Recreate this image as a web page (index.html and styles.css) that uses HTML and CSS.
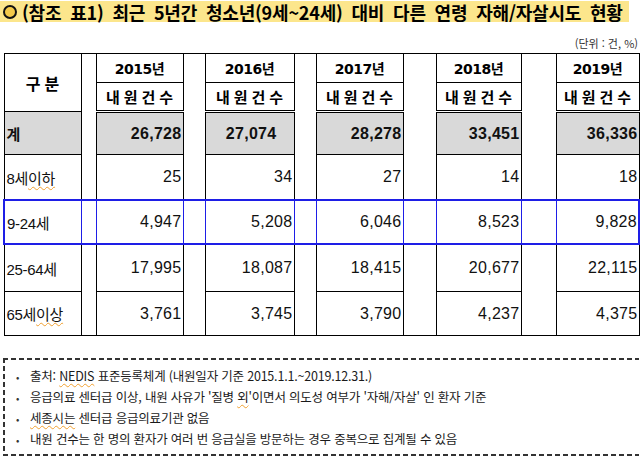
FILE: index.html
```html
<!DOCTYPE html>
<html lang="ko">
<head>
<meta charset="utf-8">
<link rel="stylesheet" href="styles.css">
</head>
<body>
<div class="title"><span class="title-hl"><span class="ring"></span>(참조 표1) 최근 5년간 청소년(9세~24세) 대비 다른 연령 자해/자살시도 현황</span></div>
<div class="unit">(단위 : 건, %)</div>
<table class="stats">
  <colgroup>
    <col class="c-label"><col class="g1"><col class="c15"><col class="g2"><col class="c16"><col class="g3"><col class="c17"><col class="g4"><col class="c18"><col class="g5"><col class="c19">
  </colgroup>
  <tr class="h1">
    <th class="label-h" rowspan="2">구분</th>
    <td class="gap" rowspan="4"></td>
    <th class="year">2015년</th>
    <td class="gap" rowspan="4"></td>
    <th class="year">2016년</th>
    <td class="gap" rowspan="4"></td>
    <th class="year">2017년</th>
    <td class="gap" rowspan="4"></td>
    <th class="year">2018년</th>
    <td class="gap" rowspan="4"></td>
    <th class="year">2019년</th>
  </tr>
  <tr class="h2">
    <th class="sub">내원건수</th>
    <th class="sub">내원건수</th>
    <th class="sub">내원건수</th>
    <th class="sub">내원건수</th>
    <th class="sub">내원건수</th>
  </tr>
  <tr class="total">
    <td class="label">계</td>
    <td class="num">26,728</td>
    <td class="num mid">27,074</td>
    <td class="num">28,278</td>
    <td class="num">33,451</td>
    <td class="num">36,336</td>
  </tr>
  <tr class="r1">
    <td class="label">8세<span class="spell">이하</span></td>
    <td class="num">25</td>
    <td class="num">34</td>
    <td class="num">27</td>
    <td class="num">14</td>
    <td class="num">18</td>
  </tr>
  <tr class="hl">
    <td class="label">9-24세</td>
    <td class="gap"></td>
    <td class="num">4,947</td>
    <td class="gap"></td>
    <td class="num">5,208</td>
    <td class="gap"></td>
    <td class="num">6,046</td>
    <td class="gap"></td>
    <td class="num">8,523</td>
    <td class="gap"></td>
    <td class="num">9,828</td>
  </tr>
  <tr class="r3">
    <td class="label">25-64세</td>
    <td class="gap" rowspan="2"></td>
    <td class="num">17,995</td>
    <td class="gap" rowspan="2"></td>
    <td class="num">18,087</td>
    <td class="gap" rowspan="2"></td>
    <td class="num">18,415</td>
    <td class="gap" rowspan="2"></td>
    <td class="num">20,677</td>
    <td class="gap" rowspan="2"></td>
    <td class="num">22,115</td>
  </tr>
  <tr class="r4">
    <td class="label">65세<span class="spell">이상</span></td>
    <td class="num">3,761</td>
    <td class="num">3,745</td>
    <td class="num">3,790</td>
    <td class="num">4,237</td>
    <td class="num">4,375</td>
  </tr>
</table>
<div class="notes">
  <p class="note"><span class="bullet">•</span>출처: <span class="spell">NEDIS</span> 표준등록체계 (내원일자 기준 2015.1.1.~2019.12.31.)</p>
  <p class="note"><span class="bullet">•</span>응급의료 센터급 이상, 내원 사유가 '질병 <span class="spell">외</span>'이면서 의도성 여부가 '자해/자살' 인 환자 기준</p>
  <p class="note"><span class="bullet">•</span><span class="spell">세종시는</span> 센터급 응급의료기관 없음</p>
  <p class="note"><span class="bullet">•</span>내원 건수는 한 명의 환자가 여러 번 응급실을 방문하는 경우 중복으로 집계될 수 있음</p>
</div>
</body>
</html>
```
FILE: styles.css
```css
html, body {
  margin: 0;
  padding: 0;
  background: #fff;
}
body {
  font-family: "Liberation Sans", "Noto Sans CJK KR", sans-serif;
  color: #111;
  width: 643px;
}
.title {
  height: 24px;
  padding-left: 0;
  padding-top: 1px;
  box-sizing: border-box;
}
.title-hl {
  display: inline-flex;
  align-items: center;
  background: #fce68c;
  height: 21px;
  padding-right: 6px;
  font-family: "Noto Sans CJK KR", sans-serif;
  font-weight: 700;
  font-size: 18px;
  letter-spacing: -0.2px;
  word-spacing: 4px;
  color: #000;
  white-space: nowrap;
}
.ring {
  display: inline-block;
  width: 10px;
  height: 10px;
  border: 2.5px solid #111;
  border-radius: 50%;
  background: #f3c94a;
  margin: 0 5px 0 3px;
}
.unit {
  height: 29px;
  padding-top: 12px;
  box-sizing: border-box;
  text-align: right;
  padding-right: 5px;
  font-family: "Noto Sans CJK KR", sans-serif;
  font-size: 11px;
  line-height: 14px;
  color: #333;
}
.stats {
  border-collapse: collapse;
  table-layout: fixed;
  width: 635px;
  margin-left: 3px;
}
.c-label { width: 77px; }
.g1 { width: 15px; }
.c15 { width: 87px; }
.g2 { width: 22px; }
.c16 { width: 89px; }
.g3 { width: 22px; }
.c17 { width: 87px; }
.g4 { width: 33px; }
.c18 { width: 85px; }
.g5 { width: 35px; }
.c19 { width: 83px; }

.stats th, .stats td {
  border: 1px solid #000;
  padding: 0;
}
.stats th {
  font-weight: 700;
  color: #000;
}
.h1 th { height: 28px; }
.h2 th { height: 27px; border-bottom: 3px double #000; }
.label-h {
  font-family: "Noto Sans CJK KR", sans-serif;
  font-size: 16px;
  letter-spacing: 4px;
  padding-left: 4px !important;
}
.year {
  font-family: "DejaVu Sans", "Noto Sans CJK KR", sans-serif;
  font-size: 14px;
  letter-spacing: -0.5px;
}
.sub {
  font-family: "Noto Sans CJK KR", sans-serif;
  font-size: 15px;
  letter-spacing: 4px;
  padding-left: 4px !important;
}
.gap {
  background: #fff;
}
.total td { height: 41px; background: #d9d9d9; font-weight: 700; }
.total .gap { background: #fff; }
.r1 td { height: 44px; }
.hl td { height: 42px; border: 1px solid #1e1ee6; border-top: 2px solid #1e1ee6; border-bottom: 2px solid #1e1ee6; }
.hl td:first-child { border-left: 2px solid #1e1ee6; }
.hl td:last-child { border-right: 2px solid #1e1ee6; }
.r3 td { height: 46px; }
.r4 td { height: 43px; }
.label {
  font-family: "Liberation Sans", "Noto Sans CJK KR", sans-serif;
  font-size: 15px;
  padding-left: 2px !important;
  text-align: left;
  letter-spacing: -0.3px;
}
.num {
  text-align: right;
  padding-right: 1px !important;
  font-size: 16px;
  letter-spacing: 0.3px;
}
.num.mid { padding-right: 17px !important; }
.spell {
  text-decoration: underline wavy #f0a030;
  text-decoration-thickness: 1px;
  text-underline-offset: 2px;
}
.notes {
  margin: 22px 4px 0 3px;
  padding: 7px 0 7px 13px;
  background-image:
    repeating-linear-gradient(90deg, #333 0 5px, transparent 5px 8px),
    repeating-linear-gradient(90deg, #333 0 5px, transparent 5px 8px),
    repeating-linear-gradient(180deg, #333 0 5px, transparent 5px 8px);
  background-size: 100% 2px, 100% 2px, 2px 100%;
  background-position: 0 0, 0 100%, 0 0;
  background-repeat: no-repeat;
  font-family: "Noto Sans CJK KR", sans-serif;
  font-size: 12.5px;
  color: #1a1a1a;
}
.note {
  margin: 0;
  height: 21px;
  line-height: 21px;
  white-space: nowrap;
  letter-spacing: -0.2px;
}
.bullet {
  display: inline-block;
  width: 14px;
  font-size: 10px;
  color: #333;
}
```
